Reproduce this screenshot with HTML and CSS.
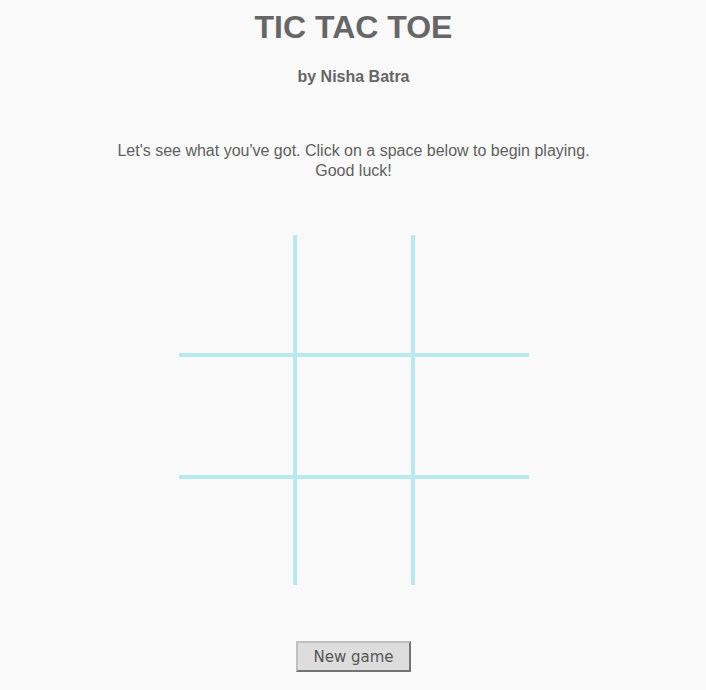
FILE: index.html
```html
<!DOCTYPE html>
<html lang="en">
<head>
<meta charset="utf-8">
<title>Tic Tac Toe</title>
<link rel="stylesheet" href="styles.css">
</head>
<body>
<main class="page">
  <h1 class="title">TIC TAC TOE</h1>
  <h2 class="byline">by Nisha Batra</h2>
  <p class="intro">Let's see what you've got. Click on a space below to begin playing. Good luck!</p>
  <div class="board">
    <div class="cell c-right c-bottom row-a"></div>
    <div class="cell c-right c-bottom row-a"></div>
    <div class="cell c-bottom row-a"></div>
    <div class="cell c-right c-bottom row-b"></div>
    <div class="cell c-right c-bottom row-b"></div>
    <div class="cell c-bottom row-b"></div>
    <div class="cell c-right row-c"></div>
    <div class="cell c-right row-c"></div>
    <div class="cell row-c"></div>
  </div>
  <button class="new-game" type="button">New game</button>
</main>
</body>
</html>
```

FILE: styles.css
```css
html, body {
  margin: 0;
  padding: 0;
  background: #f9f9f9;
}

.page {
  display: flex;
  flex-direction: column;
  align-items: center;
  font-family: "Liberation Sans", Arial, sans-serif;
  color: #666;
  padding-left: 1px;
}

.title {
  margin: 9px 0 0;
  font-size: 32px;
  line-height: 37px;
  font-weight: bold;
  color: #666;
}

.byline {
  margin: 22px 0 0;
  font-size: 16px;
  line-height: 18px;
  font-weight: bold;
  color: #666;
}

.intro {
  margin: 55px 0 0;
  width: 490px;
  text-align: center;
  font-size: 16px;
  line-height: 20px;
  color: #5f5f5f;
}

.board {
  margin-top: 54px;
  display: grid;
  grid-template-columns: 118px 118px 114px;
}

.cell {
  box-sizing: border-box;
}

.row-a { height: 122px; }
.row-b { height: 122px; }
.row-c { height: 106px; }

.c-right { border-right: 4px solid #b9e8ee; }
.c-bottom { border-bottom: 4px solid #b9e8ee; }

.new-game {
  margin-top: 56px;
  width: 115px;
  height: 31px;
  box-sizing: border-box;
  background: #dddddd;
  border: 2px solid;
  border-color: #c0c0c0 #747474 #747474 #c0c0c0;
  font-family: "DejaVu Sans", sans-serif;
  font-size: 15px;
  color: #555;
  padding: 0;
  cursor: pointer;
}
```
